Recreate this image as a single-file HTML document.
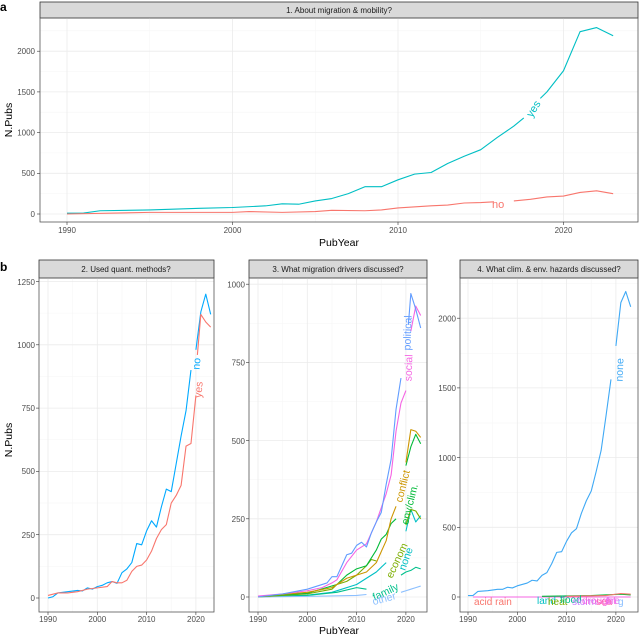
<!DOCTYPE html>
<html><head><meta charset="utf-8"><style>
html,body{margin:0;padding:0;background:#fff}
svg{display:block;font-family:"Liberation Sans",sans-serif}
.maj{stroke:#ebebeb;stroke-width:0.8}
.min{stroke:#f5f5f5;stroke-width:0.5}
.tk{fill:#4d4d4d;font-size:8px}
.tm{stroke:#333;stroke-width:0.6}
.ln{fill:none;stroke-width:1.1;vector-effect:non-scaling-stroke;stroke-linejoin:round}
.strip{fill:#d9d9d9;stroke:#333;stroke-width:0.8}
.st{font-size:8px;fill:#1a1a1a;text-anchor:middle}
.ttl{font-size:10.5px;fill:#000}
</style></head><body>
<svg width="640" height="637" viewBox="0 0 640 637">
<!-- Panel a -->
<text x="0" y="11" font-size="12" font-weight="bold">a</text>
<rect x="40" y="2" width="598" height="16" class="strip"/>
<text x="339" y="13" class="st">1. About migration &amp; mobility?</text>
<g>
<line class="min" x1="40" x2="638" y1="193.6" y2="193.6"/><line class="min" x1="40" x2="638" y1="152.9" y2="152.9"/><line class="min" x1="40" x2="638" y1="112.2" y2="112.2"/><line class="min" x1="40" x2="638" y1="71.5" y2="71.5"/><line class="min" x1="40" x2="638" y1="30.8" y2="30.8"/>
<line class="min" y1="18" y2="222" x1="149.75" x2="149.75"/><line class="min" y1="18" y2="222" x1="315.25" x2="315.25"/><line class="min" y1="18" y2="222" x1="480.75" x2="480.75"/>
<line class="maj" x1="40" x2="638" y1="214" y2="214"/><line class="maj" x1="40" x2="638" y1="173.3" y2="173.3"/><line class="maj" x1="40" x2="638" y1="132.6" y2="132.6"/><line class="maj" x1="40" x2="638" y1="91.9" y2="91.9"/><line class="maj" x1="40" x2="638" y1="51.2" y2="51.2"/>
<line class="maj" y1="18" y2="222" x1="67" x2="67"/><line class="maj" y1="18" y2="222" x1="232.5" x2="232.5"/><line class="maj" y1="18" y2="222" x1="398" x2="398"/><line class="maj" y1="18" y2="222" x1="563.5" x2="563.5"/>
</g>
<rect x="40" y="18" width="598" height="204" fill="none" stroke="#555" stroke-width="0.8"/>
<g class="tm"><line x1="37" x2="40" y1="214" y2="214"/><line x1="37" x2="40" y1="173.3" y2="173.3"/><line x1="37" x2="40" y1="132.6" y2="132.6"/><line x1="37" x2="40" y1="91.9" y2="91.9"/><line x1="37" x2="40" y1="51.2" y2="51.2"/>
<line y1="222" y2="225" x1="67" x2="67"/><line y1="222" y2="225" x1="232.5" x2="232.5"/><line y1="222" y2="225" x1="398" x2="398"/><line y1="222" y2="225" x1="563.5" x2="563.5"/></g>
<g class="tk" text-anchor="end"><text x="35" y="217">0</text><text x="35" y="176">500</text><text x="35" y="135.5">1000</text><text x="35" y="95">1500</text><text x="35" y="54">2000</text></g>
<g class="tk" text-anchor="middle"><text x="67" y="233">1990</text><text x="232.5" y="233">2000</text><text x="398" y="233">2010</text><text x="563.5" y="233">2020</text></g>
<text x="339" y="246" class="ttl" text-anchor="middle">PubYear</text>
<text transform="translate(12,120) rotate(-90)" class="ttl" text-anchor="middle">N.Pubs</text>
<g transform="matrix(16.55,0,0,-0.0814,67,214)">
<polyline class="ln" stroke="#00BFC4" points="0,10 1,12 2,40 5,50 8,70 10,80 12,100 13,125 14,120 15,160 16,190 17,250 18,335 19,335 20,420 21,490 22,510 23,620 24,710 25,790 26,940 27,1080 27.6,1180"/>
<polyline class="ln" stroke="#00BFC4" points="28.6,1420 29,1500 30,1760 31,2240 32,2290 33,2190"/>
<polyline class="ln" stroke="#F8766D" points="0,0 5,20 10,20 11,30 13,20 15,30 16,45 18,40 19,50 20,75 22,100 23,110 24,135 25,140 25.8,150"/>
<polyline class="ln" stroke="#F8766D" points="27,160 28,180 29,210 30,220 31,265 32,285 33,250"/>
</g>
<text transform="translate(532,118) rotate(-58)" fill="#00BFC4" font-size="11">yes</text>
<text x="492" y="208" fill="#F8766D" font-size="11">no</text>

<!-- Panel b -->
<text x="0" y="271" font-size="12" font-weight="bold">b</text>
<text transform="translate(12,440) rotate(-90)" class="ttl" text-anchor="middle">N.Pubs</text>
<text x="339" y="634" class="ttl" text-anchor="middle">PubYear</text>

<!-- b1 -->
<rect x="39" y="260" width="175" height="18" class="strip"/>
<text x="126" y="272" class="st">2. Used quant. methods?</text>
<g>
<line class="min" x1="39" x2="214" y1="566.3" y2="566.3"/><line class="min" x1="39" x2="214" y1="503" y2="503"/><line class="min" x1="39" x2="214" y1="439.7" y2="439.7"/><line class="min" x1="39" x2="214" y1="376.4" y2="376.4"/><line class="min" x1="39" x2="214" y1="313.1" y2="313.1"/>
<line class="min" y1="278" y2="612" x1="72.6" x2="72.6"/><line class="min" y1="278" y2="612" x1="122" x2="122"/><line class="min" y1="278" y2="612" x1="171.2" x2="171.2"/>
<line class="maj" x1="39" x2="214" y1="598" y2="598"/><line class="maj" x1="39" x2="214" y1="534.7" y2="534.7"/><line class="maj" x1="39" x2="214" y1="471.4" y2="471.4"/><line class="maj" x1="39" x2="214" y1="408.1" y2="408.1"/><line class="maj" x1="39" x2="214" y1="344.8" y2="344.8"/><line class="maj" x1="39" x2="214" y1="281.5" y2="281.5"/>
<line class="maj" y1="278" y2="612" x1="48" x2="48"/><line class="maj" y1="278" y2="612" x1="97.3" x2="97.3"/><line class="maj" y1="278" y2="612" x1="146.6" x2="146.6"/><line class="maj" y1="278" y2="612" x1="195.9" x2="195.9"/>
</g>
<rect x="39" y="278" width="175" height="334" fill="none" stroke="#555" stroke-width="0.8"/>
<g class="tm"><line x1="36" x2="39" y1="598" y2="598"/><line x1="36" x2="39" y1="534.7" y2="534.7"/><line x1="36" x2="39" y1="471.4" y2="471.4"/><line x1="36" x2="39" y1="408.1" y2="408.1"/><line x1="36" x2="39" y1="344.8" y2="344.8"/><line x1="36" x2="39" y1="281.5" y2="281.5"/>
<line y1="612" y2="615" x1="48" x2="48"/><line y1="612" y2="615" x1="97.3" x2="97.3"/><line y1="612" y2="615" x1="146.6" x2="146.6"/><line y1="612" y2="615" x1="195.9" x2="195.9"/></g>
<g class="tk" text-anchor="end"><text x="35" y="601">0</text><text x="35" y="538">250</text><text x="35" y="474">500</text><text x="35" y="411">750</text><text x="35" y="348">1000</text><text x="35" y="285">1250</text></g>
<g class="tk" text-anchor="middle"><text x="48" y="622">1990</text><text x="97.3" y="622">2000</text><text x="146.6" y="622">2010</text><text x="195.9" y="622">2020</text></g>
<g transform="matrix(4.93,0,0,-0.2532,48,598)">
<polyline class="ln" stroke="#00A9FF" points="0,0 1,5 2,20 4,25 6,30 7,28 8,40 9,35 10,45 11,50 12,60 13,65 14,58 15,100 16,115 17,140 18,215 19,210 20,265 21,305 22,280 23,360 24,430 25,420 26,530 27,640 28,740 29,900"/>
<polyline class="ln" stroke="#00A9FF" points="30,980 31,1130 32,1200 33,1120"/>
<polyline class="ln" stroke="#F8766D" points="0,10 2,20 4,20 6,25 8,35 10,40 12,45 13,65 14,60 15,60 16,70 17,105 18,125 19,130 20,150 21,185 22,235 23,270 24,290 25,375 26,405 27,445 28,600 29,610 30,800"/>
<polyline class="ln" stroke="#F8766D" points="30.3,960 31,1120 32,1090 33,1070"/>
</g>
<text transform="translate(200,364) rotate(-85)" fill="#00A9FF" font-size="10.5" text-anchor="middle">no</text>
<text transform="translate(202,390) rotate(-85)" fill="#F8766D" font-size="10.5" text-anchor="middle">yes</text>

<!-- b2 -->
<rect x="249" y="260" width="178" height="18" class="strip"/>
<text x="338" y="272" class="st">3. What migration drivers discussed?</text>
<g>
<line class="min" x1="249" x2="427" y1="557.9" y2="557.9"/><line class="min" x1="249" x2="427" y1="479.7" y2="479.7"/><line class="min" x1="249" x2="427" y1="401.5" y2="401.5"/><line class="min" x1="249" x2="427" y1="323.3" y2="323.3"/>
<line class="min" y1="278" y2="612" x1="282.6" x2="282.6"/><line class="min" y1="278" y2="612" x1="332" x2="332"/><line class="min" y1="278" y2="612" x1="381.2" x2="381.2"/>
<line class="maj" x1="249" x2="427" y1="597" y2="597"/><line class="maj" x1="249" x2="427" y1="518.8" y2="518.8"/><line class="maj" x1="249" x2="427" y1="440.6" y2="440.6"/><line class="maj" x1="249" x2="427" y1="362.4" y2="362.4"/><line class="maj" x1="249" x2="427" y1="284.2" y2="284.2"/>
<line class="maj" y1="278" y2="612" x1="258" x2="258"/><line class="maj" y1="278" y2="612" x1="307.3" x2="307.3"/><line class="maj" y1="278" y2="612" x1="356.6" x2="356.6"/><line class="maj" y1="278" y2="612" x1="405.9" x2="405.9"/>
</g>
<rect x="249" y="278" width="178" height="334" fill="none" stroke="#555" stroke-width="0.8"/>
<g class="tm"><line x1="246" x2="249" y1="597" y2="597"/><line x1="246" x2="249" y1="518.8" y2="518.8"/><line x1="246" x2="249" y1="440.6" y2="440.6"/><line x1="246" x2="249" y1="362.4" y2="362.4"/><line x1="246" x2="249" y1="284.2" y2="284.2"/>
<line y1="612" y2="615" x1="258" x2="258"/><line y1="612" y2="615" x1="307.3" x2="307.3"/><line y1="612" y2="615" x1="356.6" x2="356.6"/><line y1="612" y2="615" x1="405.9" x2="405.9"/></g>
<g class="tk" text-anchor="end"><text x="245" y="600">0</text><text x="245" y="522">250</text><text x="245" y="444">500</text><text x="245" y="365.5">750</text><text x="245" y="287.5">1000</text></g>
<g class="tk" text-anchor="middle"><text x="258" y="622">1990</text><text x="307.3" y="622">2000</text><text x="356.6" y="622">2010</text><text x="405.9" y="622">2020</text></g>
<g transform="matrix(4.93,0,0,-0.3128,258,597)">
<polyline class="ln" stroke="#00BFC4" points="0,0 5,3 10,6 15,15 20,40 24,80 26,110"/>
<polyline class="ln" stroke="#00BFC4" points="30,210 31,280 32,240 33,260"/>
<polyline class="ln" stroke="#00C08B" points="0,0 5,3 10,5 16,15 20,30 22,25"/>
<polyline class="ln" stroke="#00C08B" points="29,70 30,80 31,85 32,95 33,90"/>
<polyline class="ln" stroke="#8CC0FF" points="0,0 10,2 20,5 22,8"/>
<polyline class="ln" stroke="#8CC0FF" points="29,15 30,20 31,25 32,30 33,35"/>
<polyline class="ln" stroke="#7CAE00" points="0,0 10,10 15,25 16,40 18,50 20,70 22,100 23,120 24,115"/>
<polyline class="ln" stroke="#7CAE00" points="30,230 31,280 32,275 33,250"/>
<polyline class="ln" stroke="#00BA38" points="0,2 10,12 16,40 18,70 20,90 22,100 24,150 25,185 26,200 27,235 28,250"/>
<polyline class="ln" stroke="#00BA38" points="30,420 31,480 32,520 33,490"/>
<polyline class="ln" stroke="#CD9600" points="0,2 10,15 15,30 18,60 20,70 22,80 24,110 26,180 27,250 28,290"/>
<polyline class="ln" stroke="#CD9600" points="30,430 31,535 32,530 33,510"/>
<polyline class="ln" stroke="#F564E3" points="0,3 5,10 10,20 13,30 15,45 16,55 18,110 20,150 22,170 24,240 26,330 27,390 28,530 29,620 30,660"/>
<polyline class="ln" stroke="#F564E3" points="31,850 32,930 33,900"/>
<polyline class="ln" stroke="#619CFF" points="0,0 5,10 10,25 12,35 14,45 15,65 16,65 17,100 18,135 19,140 20,165 21,175 22,160 23,205 24,240 25,270 26,360 27,440 28,600 29,700"/>
<polyline class="ln" stroke="#619CFF" points="30.5,870 31,970 32,920 33,860"/>
</g>
<text transform="translate(411,333) rotate(-88)" fill="#619CFF" font-size="10.5" text-anchor="middle">political</text>
<text transform="translate(412,368) rotate(-88)" fill="#F564E3" font-size="10.5" text-anchor="middle">social</text>
<text transform="translate(406,487) rotate(-76)" fill="#CD9600" font-size="10.5" text-anchor="middle">conflict</text>
<text transform="translate(413,505) rotate(-76)" fill="#00BA38" font-size="10.5" text-anchor="middle">env/clim.</text>
<text transform="translate(400,562) rotate(-65)" fill="#7CAE00" font-size="10.5" text-anchor="middle">econom</text>
<text transform="translate(409,560) rotate(-70)" fill="#00BFC4" font-size="10.5" text-anchor="middle">none</text>
<text transform="translate(387,595) rotate(-25)" fill="#00C08B" font-size="10.5" text-anchor="middle">family</text>
<text transform="translate(385,602) rotate(-15)" fill="#8CC0FF" font-size="10.5" text-anchor="middle">other</text>

<!-- b3 -->
<rect x="460" y="260" width="178" height="18" class="strip"/>
<text x="549" y="272" class="st">4. What clim. &amp; env. hazards discussed?</text>
<g>
<line class="min" x1="460" x2="638" y1="562.4" y2="562.4"/><line class="min" x1="460" x2="638" y1="492.7" y2="492.7"/><line class="min" x1="460" x2="638" y1="423" y2="423"/><line class="min" x1="460" x2="638" y1="353.3" y2="353.3"/><line class="min" x1="460" x2="638" y1="283.5" y2="283.5"/>
<line class="min" y1="278" y2="612" x1="492.6" x2="492.6"/><line class="min" y1="278" y2="612" x1="542" x2="542"/><line class="min" y1="278" y2="612" x1="591.2" x2="591.2"/>
<line class="maj" x1="460" x2="638" y1="597" y2="597"/><line class="maj" x1="460" x2="638" y1="527.3" y2="527.3"/><line class="maj" x1="460" x2="638" y1="457.6" y2="457.6"/><line class="maj" x1="460" x2="638" y1="387.9" y2="387.9"/><line class="maj" x1="460" x2="638" y1="318.2" y2="318.2"/>
<line class="maj" y1="278" y2="612" x1="468" x2="468"/><line class="maj" y1="278" y2="612" x1="517.3" x2="517.3"/><line class="maj" y1="278" y2="612" x1="566.6" x2="566.6"/><line class="maj" y1="278" y2="612" x1="615.9" x2="615.9"/>
</g>
<rect x="460" y="278" width="178" height="334" fill="none" stroke="#555" stroke-width="0.8"/>
<g class="tm"><line x1="457" x2="460" y1="597" y2="597"/><line x1="457" x2="460" y1="527.3" y2="527.3"/><line x1="457" x2="460" y1="457.6" y2="457.6"/><line x1="457" x2="460" y1="387.9" y2="387.9"/><line x1="457" x2="460" y1="318.2" y2="318.2"/>
<line y1="612" y2="615" x1="468" x2="468"/><line y1="612" y2="615" x1="517.3" x2="517.3"/><line y1="612" y2="615" x1="566.6" x2="566.6"/><line y1="612" y2="615" x1="615.9" x2="615.9"/></g>
<g class="tk" text-anchor="end"><text x="456" y="600">0</text><text x="456" y="530.5">500</text><text x="456" y="461">1000</text><text x="456" y="391">1500</text><text x="456" y="321.5">2000</text></g>
<g class="tk" text-anchor="middle"><text x="468" y="622">1990</text><text x="517.3" y="622">2000</text><text x="566.6" y="622">2010</text><text x="615.9" y="622">2020</text></g>
<g transform="matrix(4.93,0,0,-0.1395,468,597)">
<polyline class="ln" stroke="#F564E3" points="1,0 33,0"/>
<polyline class="ln" stroke="#00BA38" points="15,5 25,10 31,20 33,15"/>
<polyline class="ln" stroke="#F8766D" points="20,5 28,10 31,25 33,20"/>
<polyline class="ln" stroke="#3FA9F5" points="0,10 1,10 2,40 4,45 6,55 7,55 8,70 9,65 10,80 12,100 13,120 14,115 15,155 16,175 17,240 18,320 19,325 20,400 21,460 22,490 23,600 24,690 25,760 26,900 27,1050 28,1300 29,1560"/>
<polyline class="ln" stroke="#3FA9F5" points="30,1800 31,2110 32,2190 33,2080"/>
</g>
<text transform="translate(623,370) rotate(-88)" fill="#3FA9F5" font-size="10.5" text-anchor="middle">none</text>
<text x="474" y="605" fill="#F8766D" font-size="10">acid rain</text>
<g font-size="10">
<text x="537" y="604" fill="#00BFC4">land</text>
<text x="548" y="605" fill="#7CAE00">heat</text>
<text x="560" y="603" fill="#00C08B">flood</text>
<text x="572" y="605" fill="#C77CFF">storm</text>
<text x="582" y="604" fill="#F564E3">drought</text>
<text x="596" y="605" fill="#FF64B0">sea</text>
<text x="606" y="604" fill="#E76BF3">fire</text>
<text x="618" y="605" fill="#8CC0FF">g</text>
</g>
</svg>
</body></html>
